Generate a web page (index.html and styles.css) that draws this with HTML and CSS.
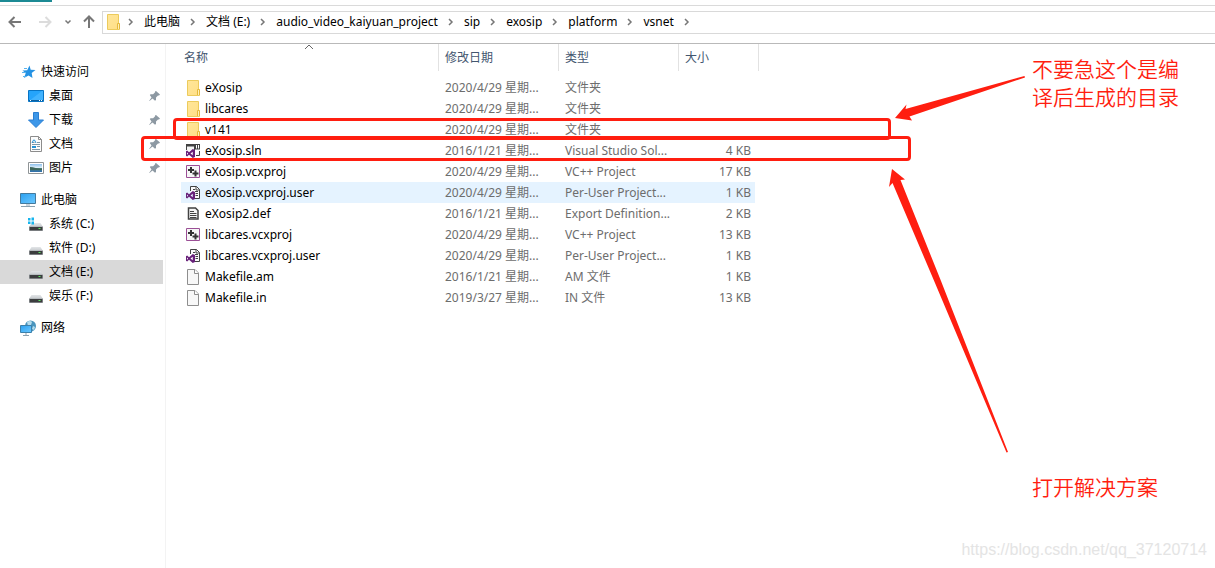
FILE: index.html
```html
<!DOCTYPE html>
<html lang="zh-CN">
<head>
<meta charset="utf-8">
<title>vsnet</title>
<link rel="stylesheet" href="styles.css">
</head>
<body>
<svg class="defs" aria-hidden="true">
  <defs>
    <linearGradient id="g-folder" x2="1" y2="1"><stop stop-color="#ffe69a"/><stop offset="1" stop-color="#ffdf85"/></linearGradient>
    <linearGradient id="g-screen" x2="1" y2="1"><stop stop-color="#2aa0f0"/><stop offset="1" stop-color="#6cc8ff"/></linearGradient>
    <linearGradient id="g-drive" x2="0" y2="1"><stop stop-color="#e3e6e8"/><stop offset="1" stop-color="#c4c8cb"/></linearGradient>
    <linearGradient id="g-photo" x2="0" y2="1"><stop stop-color="#8fc1ee"/><stop offset=".5" stop-color="#e6f3fa"/><stop offset=".55" stop-color="#4b7d72"/><stop offset="1" stop-color="#2f70b4"/></linearGradient>
  </defs>
  <symbol id="folder" viewBox="0 0 16 16"><path d="M1.500.5h11v9.500h1v5.500h-12z" fill="url(#g-folder)" stroke="#eccb5c"/><path d="M11.500 15v-5.500h2v5.500" fill="#fff0b8" stroke="#e5b93c"/></symbol>
  <symbol id="page" viewBox="0 0 16 16"><path d="M1.500.5h7.500l3.500 3.500v11.500h-11z" fill="#f8f8f8" stroke="#8e8e8e"/><path d="M8.500.5v4h4" fill="#fff" stroke="#8e8e8e"/></symbol>
  <symbol id="vs" viewBox="0 0 8 8"><path fill-rule="evenodd" d="M0 2l1-.6 1.700 1.500L6 0l2 .8v6.400L6 8 2.700 5.100 1 6.600 0 6zM.9 3v2l1-1zM4 4l2 1.600V2.400z" fill="#68217a"/></symbol>
  <symbol id="sln" viewBox="0 0 16 16"><path d="M.5 7V2h8v5M13.500 8v4.500H10" fill="#f4f4f4" stroke="#424242"/><path d="M0 1h9v2.500H0zM9 1h5v5.500H9z" fill="#424242"/><path d="M10.500 2v3.500M12.500 2v3.500" stroke="#fff"/><use href="#vs" x="0" y="6" width="9" height="9"/></symbol>
  <symbol id="vcx" viewBox="0 0 16 16"><path d="M.5 1.500h13v12H.5z" fill="#f6f6f6" stroke="#9b4f96"/><path d="M5 3v6M2 6h6M9.500 6.500v6M6.500 9.500h6" stroke="#333" stroke-width="2"/></symbol>
  <symbol id="user" viewBox="0 0 16 16"><path d="M4.500 6V1.500h6l3 3v9H9" fill="#fafafa" stroke="#424242"/><path d="M10 1.500v3.500h3.500M7 4.500h2M9 6.500h3M9.500 8.500H12M9.500 10.500H12" fill="none" stroke="#424242"/><use href="#vs" x="0" y="6" width="9" height="9"/></symbol>
  <symbol id="def" viewBox="0 0 16 16"><path d="M2.500 2h7l2.500 2.500v8.500H2.500z" fill="#f5f5f5" stroke="#424242" stroke-width="1.500"/><path d="M4 5.500h4M4 7.500h6.500M4 9.500h6.500M4 11.500h6.500" stroke="#424242"/></symbol>
  <symbol id="star" viewBox="0 0 16 16"><path d="m9.500 1.500 1.200 4.300 4.800.2-3.800 3 .8 5-4-2.600L4 14l1.700-4.800L2.500 6.500l4.700-.3z" fill="#2492e4"/><path d="M4 4.500h3M2 8.500h4M3 12.500h3" stroke="#58b3ee"/></symbol>
  <symbol id="desktop" viewBox="0 0 16 16"><path d="M.5 2.500h15v11H.5z" fill="#25a4fb" stroke="#0874c4"/><path d="M1 13 14 3h1v10z" fill="#41b3ff"/><path d="M1 12.500h14" stroke="#0d5f9d"/><path d="M2 12.500h1m8 0h1m1 0h1" stroke="#fff"/></symbol>
  <symbol id="down" viewBox="0 0 16 16"><path d="M5.500.5h5V8h5L8 15.500.5 8h5z" fill="#3d97e8" stroke="#2a7fd2"/></symbol>
  <symbol id="doc" viewBox="0 0 16 16"><path d="M2.500.5h8l3 3v12h-11z" fill="#fcfcfc" stroke="#8c8c8c"/><path d="M10.500.5v3h3" fill="none" stroke="#8c8c8c"/><path d="M4 6.500h2.500M4 8.500h8M9 6.500h3M9 10.500h3M4 13.500h8" stroke="#7e98a8"/><path d="m4 7 1.500-3h1L8 7M4 10.500h4M4 11.500h4" stroke="#2391d5" fill="none"/></symbol>
  <symbol id="photo" viewBox="0 0 16 16"><path d="M.5 2.500h15v11H.5z" fill="#fff" stroke="#8f9496"/><path d="M2 4h12v8H2z" fill="url(#g-photo)"/><path d="M2 7c4 0 7 2 12 2v1H2z" fill="#3e675c"/></symbol>
  <symbol id="pc" viewBox="0 0 16 16"><path d="M.5 1.500h15v10H.5z" fill="url(#g-screen)" stroke="#447a9d"/><path d="M6 12h4v2H6z" fill="#c8d4dc"/><path d="M1 14.500h14" stroke="#8ba0ae"/></symbol>
  <symbol id="drive" viewBox="0 0 16 16"><path d="m3.500 7h9l2.500 4H1z" fill="url(#g-drive)"/><path d="M1 10h14v5H1z" fill="#b7bcbf"/><path d="M1.500 11h13v3.500h-13z" fill="#3b3d3e"/><path d="M10.500 12.500h2" stroke="#5dea63"/></symbol>
  <symbol id="sysdrive" viewBox="0 0 16 16"><use href="#drive"/><path d="M0 2h2.500v2.500H0zM3.500 1.500H6v3H3.500zM0 5.500h2.500V8H0zM3.500 5.500H6v3H3.500z" fill="#16b5ee"/></symbol>
  <symbol id="net" viewBox="0 0 16 16"><circle cx="10.500" cy="6" r="5.500" fill="#4a95bd"/><path d="M7 2c2-1.500 4-1.500 5 0l-1 3-3 1zM13 6l2 1-1 3-2-1z" fill="#b7dded"/><path d="M.5 5.500h11v7H.5z" fill="url(#g-screen)" stroke="#3c80aa"/><path d="M3 15.500h6M6 13v2" stroke="#8ba0ae"/></symbol>
  <symbol id="pin" viewBox="0 0 12 12"><path d="m7 1 4 3.500-1 1-1 0-2 2 0 2.500-1 .8-2.500-2.300L.5 11l-.3-.3L2.500 7.500.8 5l.8-.8 2.500 0 2-2-.1-.8z" fill="#8d99a3"/></symbol>
  <symbol id="chev" viewBox="0 0 6 8"><path d="m1 1 3 3-3 3" fill="none" stroke="#777" stroke-width="1.500"/></symbol>
</svg>

<div class="tabs"><span class="tab-accent"></span></div>

<header class="toolbar">
  <button class="tool back" aria-label="后退"><svg viewBox="0 0 14 14"><path d="M13 7H2M6.500 2 1.500 7l5 5"/></svg></button>
  <button class="tool forward" aria-label="前进"><svg viewBox="0 0 14 14"><path d="M1 7h11M7.500 2l5 5-5 5"/></svg></button>
  <button class="tool recent" aria-label="最近位置"><svg viewBox="0 0 14 14"><path d="m4.500 5.500 2.500 2.500 2.500-2.500"/></svg></button>
  <button class="tool up" aria-label="上移"><svg viewBox="0 0 14 14"><path d="M7 13V2M2 6.500l5-5 5 5"/></svg></button>
  <nav class="address" aria-label="地址">
    <svg class="icon"><use href="#folder"/></svg>
    <svg class="sep"><use href="#chev"/></svg><a href="#">此电脑</a>
    <svg class="sep"><use href="#chev"/></svg><a href="#">文档 (E:)</a>
    <svg class="sep"><use href="#chev"/></svg><a href="#">audio_video_kaiyuan_project</a>
    <svg class="sep"><use href="#chev"/></svg><a href="#">sip</a>
    <svg class="sep"><use href="#chev"/></svg><a href="#">exosip</a>
    <svg class="sep"><use href="#chev"/></svg><a href="#">platform</a>
    <svg class="sep"><use href="#chev"/></svg><a href="#">vsnet</a>
    <svg class="sep"><use href="#chev"/></svg>
  </nav>
</header>

<div class="content">
  <nav class="sidebar" aria-label="导航窗格">
    <section class="group">
      <a class="item root" href="#"><svg class="icon"><use href="#star"/></svg>快速访问</a>
      <a class="item" href="#"><svg class="icon"><use href="#desktop"/></svg>桌面<svg class="pin"><use href="#pin"/></svg></a>
      <a class="item" href="#"><svg class="icon"><use href="#down"/></svg>下载<svg class="pin"><use href="#pin"/></svg></a>
      <a class="item" href="#"><svg class="icon"><use href="#doc"/></svg>文档<svg class="pin"><use href="#pin"/></svg></a>
      <a class="item" href="#"><svg class="icon"><use href="#photo"/></svg>图片<svg class="pin"><use href="#pin"/></svg></a>
    </section>
    <section class="group">
      <a class="item root" href="#"><svg class="icon"><use href="#pc"/></svg>此电脑</a>
      <a class="item" href="#"><svg class="icon"><use href="#sysdrive"/></svg>系统 (C:)</a>
      <a class="item" href="#"><svg class="icon"><use href="#drive"/></svg>软件 (D:)</a>
      <a class="item selected" href="#"><svg class="icon"><use href="#drive"/></svg>文档 (E:)</a>
      <a class="item" href="#"><svg class="icon"><use href="#drive"/></svg>娱乐 (F:)</a>
    </section>
    <section class="group">
      <a class="item root" href="#"><svg class="icon"><use href="#net"/></svg>网络</a>
    </section>
  </nav>

  <main class="files">
    <table>
      <colgroup><col class="c-name"><col class="c-date"><col class="c-type"><col class="c-size"></colgroup>
      <thead>
        <tr><th>名称<svg class="sort" viewBox="0 0 10 6"><path d="m1 5 4-4 4 4"/></svg></th><th>修改日期</th><th>类型</th><th>大小</th></tr>
      </thead>
      <tbody>
        <tr><td><span class="name"><svg class="icon"><use href="#folder"/></svg>eXosip</span></td><td>2020/4/29 星期...</td><td>文件夹</td><td></td></tr>
        <tr><td><span class="name"><svg class="icon"><use href="#folder"/></svg>libcares</span></td><td>2020/4/29 星期...</td><td>文件夹</td><td></td></tr>
        <tr><td><span class="name"><svg class="icon"><use href="#folder"/></svg>v141</span></td><td>2020/4/29 星期...</td><td>文件夹</td><td></td></tr>
        <tr><td><span class="name"><svg class="icon"><use href="#sln"/></svg>eXosip.sln</span></td><td>2016/1/21 星期...</td><td>Visual Studio Sol...</td><td>4 KB</td></tr>
        <tr><td><span class="name"><svg class="icon"><use href="#vcx"/></svg>eXosip.vcxproj</span></td><td>2020/4/29 星期...</td><td>VC++ Project</td><td>17 KB</td></tr>
        <tr class="hover"><td><span class="name"><svg class="icon"><use href="#user"/></svg>eXosip.vcxproj.user</span></td><td>2020/4/29 星期...</td><td>Per-User Project...</td><td>1 KB</td></tr>
        <tr><td><span class="name"><svg class="icon"><use href="#def"/></svg>eXosip2.def</span></td><td>2016/1/21 星期...</td><td>Export Definition...</td><td>2 KB</td></tr>
        <tr><td><span class="name"><svg class="icon"><use href="#vcx"/></svg>libcares.vcxproj</span></td><td>2020/4/29 星期...</td><td>VC++ Project</td><td>13 KB</td></tr>
        <tr><td><span class="name"><svg class="icon"><use href="#user"/></svg>libcares.vcxproj.user</span></td><td>2020/4/29 星期...</td><td>Per-User Project...</td><td>1 KB</td></tr>
        <tr><td><span class="name"><svg class="icon"><use href="#page"/></svg>Makefile.am</span></td><td>2016/1/21 星期...</td><td>AM 文件</td><td>1 KB</td></tr>
        <tr><td><span class="name"><svg class="icon"><use href="#page"/></svg>Makefile.in</span></td><td>2019/3/27 星期...</td><td>IN 文件</td><td>13 KB</td></tr>
      </tbody>
    </table>
  </main>
</div>

<div class="mark mark-folder"></div>
<div class="mark mark-solution"></div>
<svg class="arrow arrow-folder" viewBox="0 0 130 46"><path d="M0 42 11.500 28.500 10.500 33 129.500 0 130 1.500 14.500 40.500 17 44.500z"/></svg>
<svg class="arrow arrow-solution" viewBox="0 0 120 284"><path d="M4 0 17 10.500 12.500 11 53 112 120 283 118.500 283.500 47 114 4.500 14 1 18z"/></svg>
<p class="note note-folder">不要急这个是编<br>译后生成的目录</p>
<p class="note note-solution">打开解决方案</p>
<p class="watermark">https://blog.csdn.net/qq_37120714</p>
</body>
</html>
```
FILE: styles.css
```css
* { box-sizing: border-box; }

body {
  margin: 0;
  min-height: 100vh;
  position: relative;
  display: flex;
  flex-direction: column;
  background: #fff;
  color: #000;
  font: 12px/20px "Noto Sans", "Noto Sans CJK SC", sans-serif;
}

a { color: inherit; text-decoration: none; }

.defs { position: absolute; width: 0; height: 0; }
.icon { width: 16px; height: 16px; flex: none; }

.tabs { height: 6px; border-bottom: 1px solid #dadada; }
.tab-accent { display: block; width: 52px; height: 2px; background: #1c8a94; }

.toolbar {
  display: flex;
  align-items: center;
  height: 38px;
  padding: 0 0 5px 8px;
  border-bottom: 1px solid #b9b9b9;
}

.tool {
  display: flex;
  width: 14px;
  height: 14px;
  padding: 0;
  border: 0;
  background: none;
}
.tool svg { width: 14px; height: 14px; fill: none; stroke: #777; stroke-width: 2; }
.forward { margin-left: 16px; }
.forward svg { stroke: #dcdcdc; }
.recent { margin-left: 9px; }
.recent svg { stroke-width: 1.5; }
.up { margin-left: 7px; }

.address {
  flex: 1;
  display: flex;
  align-items: center;
  height: 23px;
  margin-left: 6px;
  padding-left: 3px;
  border: 1px solid #d9d9d9;
  border-right: 0;
  white-space: nowrap;
}
.sep { width: 6px; height: 8px; margin: 0 10px; }
.address .icon + .sep { margin-left: 6px; }

.content { flex: 1; display: flex; }

.sidebar {
  flex: none;
  width: 166px;
  padding: 16px 2px 0 0;
  border-right: 1px solid #f3f3f3;
}
.group { margin-bottom: 8px; }
.item {
  display: flex;
  align-items: center;
  gap: 5px;
  height: 24px;
  padding: 0 2px 0 28px;
}
.root { padding-left: 20px; }
.selected { background: #d9d9d9; }
.pin { width: 12px; height: 12px; margin-left: auto; }

.files { flex: 1; padding-left: 15px; }

table { border-collapse: separate; border-spacing: 0; table-layout: fixed; width: 578px; }
.c-name { width: 258px; }
.c-date, .c-type { width: 120px; }
.c-size { width: 80px; }

th {
  position: relative;
  height: 27px;
  padding: 0 6px;
  border-right: 1px solid #e2e2e2;
  color: #43566f;
  font-weight: 400;
  text-align: left;
}
th:first-child { padding-left: 3px; }
.sort {
  position: absolute;
  top: 0;
  left: 123px;
  width: 10px;
  height: 6px;
  fill: none;
  stroke: #666;
}

tbody::before { content: ""; display: block; height: 6px; }
td { height: 21px; padding: 0 6px; color: #6d6d6d; line-height: 20px; white-space: nowrap; }
td:first-child { padding-left: 5px; color: #000; }
td:last-child { padding-right: 8px; text-align: right; }
.name { display: flex; align-items: center; gap: 3px; }
.hover td { background: #e5f3ff; }
.hover td:last-child { background: linear-gradient(#e5f3ff, #e5f3ff) 0 0 / calc(100% - 4px) 100% no-repeat; }

.mark { position: absolute; border: 3px solid #ff1e10; border-radius: 4px; }
.mark-folder { left: 173px; top: 118px; width: 718px; height: 22px; }
.mark-solution { left: 141px; top: 136px; width: 770px; height: 25px; }

.arrow { position: absolute; fill: #ff1e10; }
.arrow-folder { left: 895px; top: 76px; width: 130px; height: 46px; }
.arrow-solution { left: 888px; top: 169px; width: 120px; height: 284px; }

.note {
  position: absolute;
  margin: 0;
  color: #ff1e10;
  font-size: 21px;
  font-weight: 350;
  line-height: 28px;
}
.note-folder { left: 1032px; top: 55px; }
.note-solution { left: 1032px; top: 473px; }

.watermark {
  position: absolute;
  right: 8px;
  bottom: 8px;
  margin: 0;
  color: #e4e4e4;
  font: 16px/20px "Liberation Sans", Arial, sans-serif;
}
```
